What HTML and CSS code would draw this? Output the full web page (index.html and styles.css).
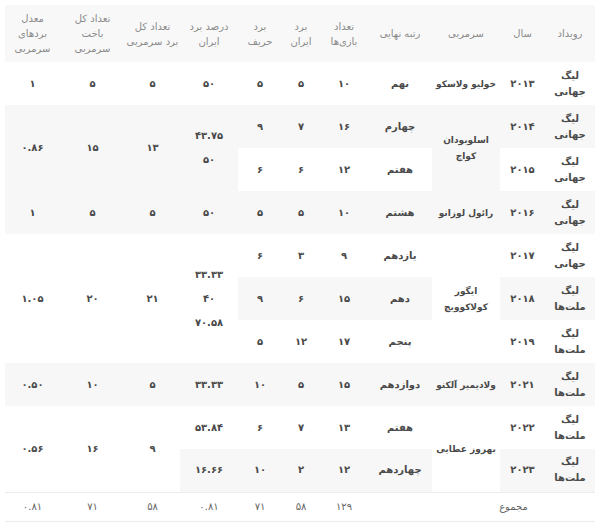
FILE: index.html
```html
<!DOCTYPE html>
<html lang="fa" dir="rtl">
<head>
<meta charset="utf-8">
<title>سرمربیان</title>
<link rel="stylesheet" href="styles.css">
</head>
<body>
<table class="stats">
  <colgroup>
    <col class="c-event">
    <col class="c-year">
    <col class="c-coach">
    <col class="c-rank">
    <col class="c-games">
    <col class="c-win">
    <col class="c-lose">
    <col class="c-pct">
    <col class="c-twin">
    <col class="c-tlose">
    <col class="c-avg">
  </colgroup>
  <thead>
    <tr>
      <th>رویداد</th>
      <th>سال</th>
      <th>سرمربی</th>
      <th>رتبه نهایی</th>
      <th>تعداد<br>بازی‌ها</th>
      <th>برد<br>ایران</th>
      <th>برد<br>حریف</th>
      <th>درصد برد<br>ایران</th>
      <th>تعداد کل<br>برد سرمربی</th>
      <th>تعداد کل<br>باخت<br>سرمربی</th>
      <th>معدل<br>بردهای<br>سرمربی</th>
    </tr>
  </thead>
  <tbody>
    <tr>
      <td>لیگ<br>جهانی</td>
      <td>۲۰۱۳</td>
      <td class="coach">خولیو ولاسکو</td>
      <td>نهم</td>
      <td>۱۰</td>
      <td>۵</td>
      <td>۵</td>
      <td>۵۰</td>
      <td>۵</td>
      <td>۵</td>
      <td>۱</td>
    </tr>
    <tr>
      <td>لیگ<br>جهانی</td>
      <td>۲۰۱۴</td>
      <td class="coach" rowspan="2">اسلوبودان<br>کواچ</td>
      <td>چهارم</td>
      <td>۱۶</td>
      <td>۷</td>
      <td>۹</td>
      <td rowspan="2"><div class="val">۴۳.۷۵</div><div class="val">۵۰</div></td>
      <td rowspan="2">۱۳</td>
      <td rowspan="2">۱۵</td>
      <td rowspan="2">۰.۸۶</td>
    </tr>
    <tr>
      <td>لیگ<br>جهانی</td>
      <td>۲۰۱۵</td>
      <td>هفتم</td>
      <td>۱۲</td>
      <td>۶</td>
      <td>۶</td>
    </tr>
    <tr>
      <td>لیگ<br>جهانی</td>
      <td>۲۰۱۶</td>
      <td class="coach">رائول لوزانو</td>
      <td>هشتم</td>
      <td>۱۰</td>
      <td>۵</td>
      <td>۵</td>
      <td>۵۰</td>
      <td>۵</td>
      <td>۵</td>
      <td>۱</td>
    </tr>
    <tr>
      <td>لیگ<br>جهانی</td>
      <td>۲۰۱۷</td>
      <td class="coach" rowspan="3">ایگور<br>کولاکوویچ</td>
      <td>یازدهم</td>
      <td>۹</td>
      <td>۳</td>
      <td>۶</td>
      <td rowspan="3"><div class="val">۳۳.۳۳</div><div class="val">۴۰</div><div class="val">۷۰.۵۸</div></td>
      <td rowspan="3">۲۱</td>
      <td rowspan="3">۲۰</td>
      <td rowspan="3">۱.۰۵</td>
    </tr>
    <tr>
      <td>لیگ<br>ملت‌ها</td>
      <td>۲۰۱۸</td>
      <td>دهم</td>
      <td>۱۵</td>
      <td>۶</td>
      <td>۹</td>
    </tr>
    <tr>
      <td>لیگ<br>ملت‌ها</td>
      <td>۲۰۱۹</td>
      <td>پنجم</td>
      <td>۱۷</td>
      <td>۱۲</td>
      <td>۵</td>
    </tr>
    <tr>
      <td>لیگ<br>ملت‌ها</td>
      <td>۲۰۲۱</td>
      <td class="coach">ولادیمیر آلکنو</td>
      <td>دوازدهم</td>
      <td>۱۵</td>
      <td>۵</td>
      <td>۱۰</td>
      <td>۳۳.۳۳</td>
      <td>۵</td>
      <td>۱۰</td>
      <td>۰.۵۰</td>
    </tr>
    <tr>
      <td>لیگ<br>ملت‌ها</td>
      <td>۲۰۲۲</td>
      <td class="coach" rowspan="2">بهروز عطایی</td>
      <td>هفتم</td>
      <td>۱۳</td>
      <td>۷</td>
      <td>۶</td>
      <td>۵۳.۸۴</td>
      <td rowspan="2">۹</td>
      <td rowspan="2">۱۶</td>
      <td rowspan="2">۰.۵۶</td>
    </tr>
    <tr>
      <td>لیگ<br>ملت‌ها</td>
      <td>۲۰۲۳</td>
      <td>چهاردهم</td>
      <td>۱۲</td>
      <td>۲</td>
      <td>۱۰</td>
      <td>۱۶.۶۶</td>
    </tr>
  </tbody>
  <tfoot>
    <tr>
      <td colspan="3">مجموع</td>
      <td></td>
      <td>۱۲۹</td>
      <td>۵۸</td>
      <td>۷۱</td>
      <td>۰.۸۱</td>
      <td>۵۸</td>
      <td>۷۱</td>
      <td>۰.۸۱</td>
    </tr>
  </tfoot>
</table>
</body>
</html>
```
FILE: styles.css
```css
html, body {
  background: #ffffff;
}
body {
  margin: 5px;
  font-family: "DejaVu Sans", "Noto Sans", sans-serif;
  font-size: 10px;
  color: #4a4a4a;
}
.stats {
  width: 590px;
  table-layout: fixed;
  border-collapse: collapse;
  text-align: center;
}
.c-event { width: 50px; }
.c-year { width: 45px; }
.c-coach { width: 68px; }
.c-rank { width: 64px; }
.c-games { width: 48px; }
.c-win { width: 38px; }
.c-lose { width: 44px; }
.c-pct { width: 58px; }
.c-twin { width: 55px; }
.c-tlose { width: 65px; }
.c-avg { width: 55px; }

.stats th {
  background: #f8f8f8;
  color: #8a8a8a;
  font-weight: normal;
  line-height: 15px;
  height: 57px;
  padding: 0;
  white-space: nowrap;
  vertical-align: middle;
}
.stats td {
  padding: 0 2px;
  line-height: 16px;
  font-weight: bold;
  vertical-align: middle;
}
.stats td.coach {
  padding: 0;
  white-space: nowrap;
  font-size: 9px;
}
.stats tbody tr {
  height: 43px;
}
.stats tbody tr:nth-child(even) {
  background: #f7f7f7;
}
.val {
  line-height: 24px;
}
.stats tfoot tr {
  height: 29px;
  border-top: 1px solid #ececec;
  border-bottom: 1px solid #ececec;
}
.stats tfoot td {
  font-weight: normal;
  color: #666666;
}
```
